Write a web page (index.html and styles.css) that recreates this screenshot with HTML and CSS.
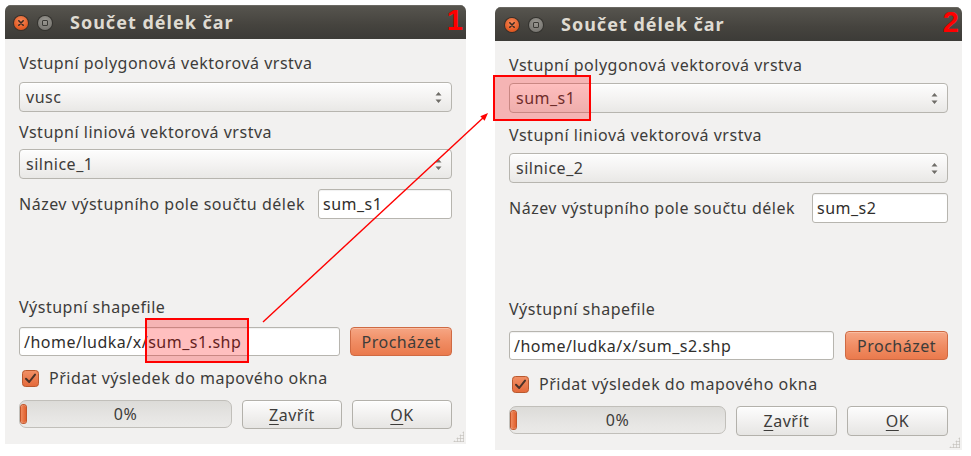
FILE: index.html
```html
<!DOCTYPE html>
<html lang="cs">
<head>
<meta charset="utf-8">
<title>Součet délek čar</title>
<link rel="stylesheet" href="styles.css">
</head>
<body>
<div class="canvas">

  <section class="window win1">
    <header class="titlebar">
      <span class="wbtn close"><svg width="14" height="14" viewBox="0 0 14 14"><path d="M4.8 4.8 L9.2 9.2 M9.2 4.8 L4.8 9.2" stroke="#3a2a22" stroke-width="1.6" stroke-linecap="round"/></svg></span>
      <span class="wbtn max"><span class="sq"></span></span>
      <span class="title">Součet délek čar</span>
      <span class="num">1</span>
    </header>
    <div class="content">
      <div class="label l1">Vstupní polygonová vektorová vrstva</div>
      <div class="combo c1"><span class="val">vusc</span><svg class="spin" width="7" height="13" viewBox="0 0 7 13"><path d="M3.5 1 L6.5 4.5 L0.5 4.5 Z M3.5 12 L6.5 8.5 L0.5 8.5 Z" fill="#6f6d68"/></svg></div>
      <div class="label l2">Vstupní liniová vektorová vrstva</div>
      <div class="combo c2"><span class="val">silnice_1</span><svg class="spin" width="7" height="13" viewBox="0 0 7 13"><path d="M3.5 1 L6.5 4.5 L0.5 4.5 Z M3.5 12 L6.5 8.5 L0.5 8.5 Z" fill="#6f6d68"/></svg></div>
      <div class="field-row r3"><span class="label">Název výstupního pole součtu délek</span><div class="input short">sum_s1</div></div>
      <div class="spacer"></div>
      <div class="label l4">Výstupní shapefile</div>
      <div class="path-row"><div class="input path">/home/ludka/x/sum_s1.shp</div><div class="button accent">Procházet</div></div>
      <div class="check-row"><svg class="checkbox" width="17" height="17" viewBox="0 0 17 17"><defs><linearGradient id="cb1" x1="0" y1="0" x2="0" y2="1"><stop offset="0" stop-color="#f19066"/><stop offset="1" stop-color="#e4693a"/></linearGradient></defs><rect x="0.5" y="0.5" width="16" height="16" rx="3" fill="url(#cb1)" stroke="#b9592f"/><path d="M4 8.8 L7.2 12 L13 4.6" fill="none" stroke="#4a3228" stroke-width="2" stroke-linecap="round" stroke-linejoin="round"/></svg><span>Přidat výsledek do mapového okna</span></div>
      <div class="bottom-row"><div class="progress"><span class="chunk"></span><span class="pct">0%</span></div><div class="button"><span class="mn">Z</span>avřít</div><div class="button"><span class="mn">O</span>K</div></div>
    </div>
    <span class="grip"></span>
  </section>

  <section class="window win2">
    <header class="titlebar">
      <span class="wbtn close"><svg width="14" height="14" viewBox="0 0 14 14"><path d="M4.8 4.8 L9.2 9.2 M9.2 4.8 L4.8 9.2" stroke="#3a2a22" stroke-width="1.6" stroke-linecap="round"/></svg></span>
      <span class="wbtn max"><span class="sq"></span></span>
      <span class="title">Součet délek čar</span>
      <span class="num">2</span>
    </header>
    <div class="content">
      <div class="label l1">Vstupní polygonová vektorová vrstva</div>
      <div class="combo c1"><span class="val">sum_s1</span><svg class="spin" width="7" height="13" viewBox="0 0 7 13"><path d="M3.5 1 L6.5 4.5 L0.5 4.5 Z M3.5 12 L6.5 8.5 L0.5 8.5 Z" fill="#6f6d68"/></svg></div>
      <div class="label l2">Vstupní liniová vektorová vrstva</div>
      <div class="combo c2"><span class="val">silnice_2</span><svg class="spin" width="7" height="13" viewBox="0 0 7 13"><path d="M3.5 1 L6.5 4.5 L0.5 4.5 Z M3.5 12 L6.5 8.5 L0.5 8.5 Z" fill="#6f6d68"/></svg></div>
      <div class="field-row r3"><span class="label">Název výstupního pole součtu délek</span><div class="input short">sum_s2</div></div>
      <div class="spacer"></div>
      <div class="label l4">Výstupní shapefile</div>
      <div class="path-row"><div class="input path">/home/ludka/x/sum_s2.shp</div><div class="button accent">Procházet</div></div>
      <div class="check-row"><svg class="checkbox" width="17" height="17" viewBox="0 0 17 17"><defs><linearGradient id="cb2" x1="0" y1="0" x2="0" y2="1"><stop offset="0" stop-color="#f19066"/><stop offset="1" stop-color="#e4693a"/></linearGradient></defs><rect x="0.5" y="0.5" width="16" height="16" rx="3" fill="url(#cb2)" stroke="#b9592f"/><path d="M4 8.8 L7.2 12 L13 4.6" fill="none" stroke="#4a3228" stroke-width="2" stroke-linecap="round" stroke-linejoin="round"/></svg><span>Přidat výsledek do mapového okna</span></div>
      <div class="bottom-row"><div class="progress"><span class="chunk"></span><span class="pct">0%</span></div><div class="button"><span class="mn">Z</span>avřít</div><div class="button"><span class="mn">O</span>K</div></div>
    </div>
    <span class="grip"></span>
  </section>

  <div class="highlight hl1"></div>
  <div class="highlight hl2"></div>

  <svg class="arrow" width="971" height="456" viewBox="0 0 971 456">
    <line x1="263" y1="322" x2="484" y2="117" stroke="#ff0000" stroke-width="1.4"/>
    <path d="M488 113 L484.6 120.8 L480.3 116.2 Z" fill="#ff0000"/>
  </svg>

</div>
</body>
</html>
```

FILE: styles.css
```css
* { box-sizing: border-box; }

html, body {
  margin: 0;
  padding: 0;
  background: #ffffff;
}

body {
  font-family: "Noto Sans", "DejaVu Sans", sans-serif;
  font-size: 16px;
  letter-spacing: 0.5px;
  color: #3d3c3a;
}

.canvas {
  position: relative;
  width: 971px;
  height: 456px;
  overflow: hidden;
}

/* windows placed on the desktop canvas */
.window {
  position: absolute;
  display: flex;
  flex-direction: column;
  background: #f2f1f0;
  border-radius: 6px 6px 0 0;
  overflow: hidden;
}

.win1 { left: 5px; top: 5px; width: 461px; height: 439px; }
.win2 { left: 495px; top: 7px; width: 467px; height: 443px; }

.titlebar {
  position: relative;
  flex: none;
  height: 34px;
  display: flex;
  align-items: center;
  padding-left: 9px;
  background: linear-gradient(#57554f, #45433e 60%, #3c3b37);
  box-shadow: inset 0 1px 0 #6a6862;
}

.win2 .titlebar { padding-left: 10px; }

.wbtn {
  width: 14px;
  height: 14px;
  border-radius: 50%;
  display: flex;
  align-items: center;
  justify-content: center;
  margin-top: 2px;
}

.wbtn.close {
  background: radial-gradient(circle at 50% 35%, #f58a5c, #e25a22 70%, #c9461a);
  box-shadow: 0 0 0 1px #3a2f28;
}

.wbtn.max {
  margin-left: 10px;
  background: radial-gradient(circle at 50% 35%, #9a9892, #7b7974 70%, #6a6864);
  box-shadow: 0 0 0 1px #33322e;
}

.wbtn .sq {
  width: 6px;
  height: 6px;
  border: 1px solid #3b3a36;
  border-radius: 1px;
}

.title {
  margin-left: 18px;
  font-weight: bold;
  font-size: 18px;
  letter-spacing: 1px;
  color: #dfdbd2;
}

.num {
  position: absolute;
  right: 3px;
  top: 1px;
  font-family: "Liberation Sans", Arial, sans-serif;
  font-weight: bold;
  font-size: 29px;
  line-height: 29px;
  letter-spacing: 0;
  color: #ff0000;
}

.content {
  flex: 1;
  display: flex;
  flex-direction: column;
  padding: 14px 14px 15px 14px;
}

.win2 .content { padding-bottom: 14px; }

.label {
  height: 20px;
  line-height: 20px;
  white-space: nowrap;
}

.combo {
  height: 30px;
  display: flex;
  align-items: center;
  justify-content: space-between;
  padding: 0 9px 0 6px;
  border: 1px solid #b7b5af;
  border-radius: 4px;
  background: linear-gradient(#fdfdfd, #f4f3f2 50%, #e9e8e6);
  box-shadow: inset 0 1px 0 #ffffff;
}

.c1 { margin-top: 9px; }
.l2 { margin-top: 10px; }
.c2 { margin-top: 7px; }
.r3 { margin-top: 10px; }

.win2 .c1 { margin-top: 8px; }
.win2 .l2 { margin-top: 12px; }
.win2 .c2 { margin-top: 8px; }

.field-row {
  height: 30px;
  display: flex;
  align-items: center;
  justify-content: space-between;
}

.input {
  height: 30px;
  display: flex;
  align-items: center;
  padding: 0 4px;
  background: #ffffff;
  border: 1px solid #b7b5af;
  border-radius: 3px;
  box-shadow: inset 0 1px 1px rgba(0,0,0,0.06);
  white-space: nowrap;
  color: #2f2e2c;
}

.input.short { width: 134px; }
.win2 .input.short { width: 136px; }

.spacer { flex: 1; }

.path-row {
  margin-top: 10px;
  height: 29px;
  display: grid;
  grid-template-columns: 1fr 102px;
  column-gap: 10px;
}

.win2 .path-row {
  margin-top: 12px;
  grid-template-columns: 1fr 103px;
  column-gap: 11px;
}

.input.path { height: 29px; }

.button {
  height: 29px;
  display: flex;
  align-items: center;
  justify-content: center;
  border: 1px solid #b3b1ab;
  border-radius: 4px;
  background: linear-gradient(#fdfdfd, #f2f1f0 50%, #e6e5e3);
  box-shadow: inset 0 1px 0 #ffffff;
  color: #3d3c3a;
}

.button.accent {
  border-color: #cf6a43;
  background: linear-gradient(#f6a684, #f08d64 50%, #ea7a4d);
  box-shadow: inset 0 1px 0 #f9bda2;
}

.mn {
  text-decoration: underline;
  text-underline-offset: 3px;
}

.check-row {
  margin-top: 12px;
  height: 20px;
  display: flex;
  align-items: center;
  gap: 10px;
  padding-left: 3px;
  white-space: nowrap;
}

.win2 .check-row { margin-top: 14px; }

.checkbox { flex: none; }

.bottom-row {
  margin-top: 12px;
  height: 29px;
  display: grid;
  grid-template-columns: 1fr 100px 100px;
  column-gap: 10px;
}

.win2 .bottom-row {
  height: 30px;
  grid-template-columns: 1fr 101px 101px;
}

.win2 .button { height: 100%; }

.progress {
  position: relative;
  height: 28px;
  display: flex;
  align-items: center;
  justify-content: center;
  border: 1px solid #c1bfba;
  border-radius: 7px;
  background: linear-gradient(#dcdbd8, #e6e5e3 60%, #ebeae8);
}

.chunk {
  position: absolute;
  left: 1px;
  top: 4px;
  bottom: 4px;
  width: 5px;
  border-radius: 3px;
  background: linear-gradient(90deg, #f08a5d, #e0602e);
  box-shadow: 0 0 0 1px #c2552a;
}

.pct { color: #3d3c3a; }

.grip {
  position: absolute;
  right: 2px;
  bottom: 2px;
  width: 11px;
  height: 11px;
  background-image: radial-gradient(circle, #c9c7c2 0.9px, transparent 1.3px);
  background-size: 3px 3px;
  clip-path: polygon(100% 0, 100% 100%, 0 100%);
}

/* annotation overlays */
.highlight {
  position: absolute;
  border: 2px solid #ff0000;
  background: rgba(255, 0, 0, 0.25);
}

.hl1 { left: 145px; top: 318px; width: 104px; height: 45px; }
.hl2 { left: 493px; top: 75px; width: 98px; height: 46px; }

.arrow {
  position: absolute;
  left: 0;
  top: 0;
  pointer-events: none;
}
```
